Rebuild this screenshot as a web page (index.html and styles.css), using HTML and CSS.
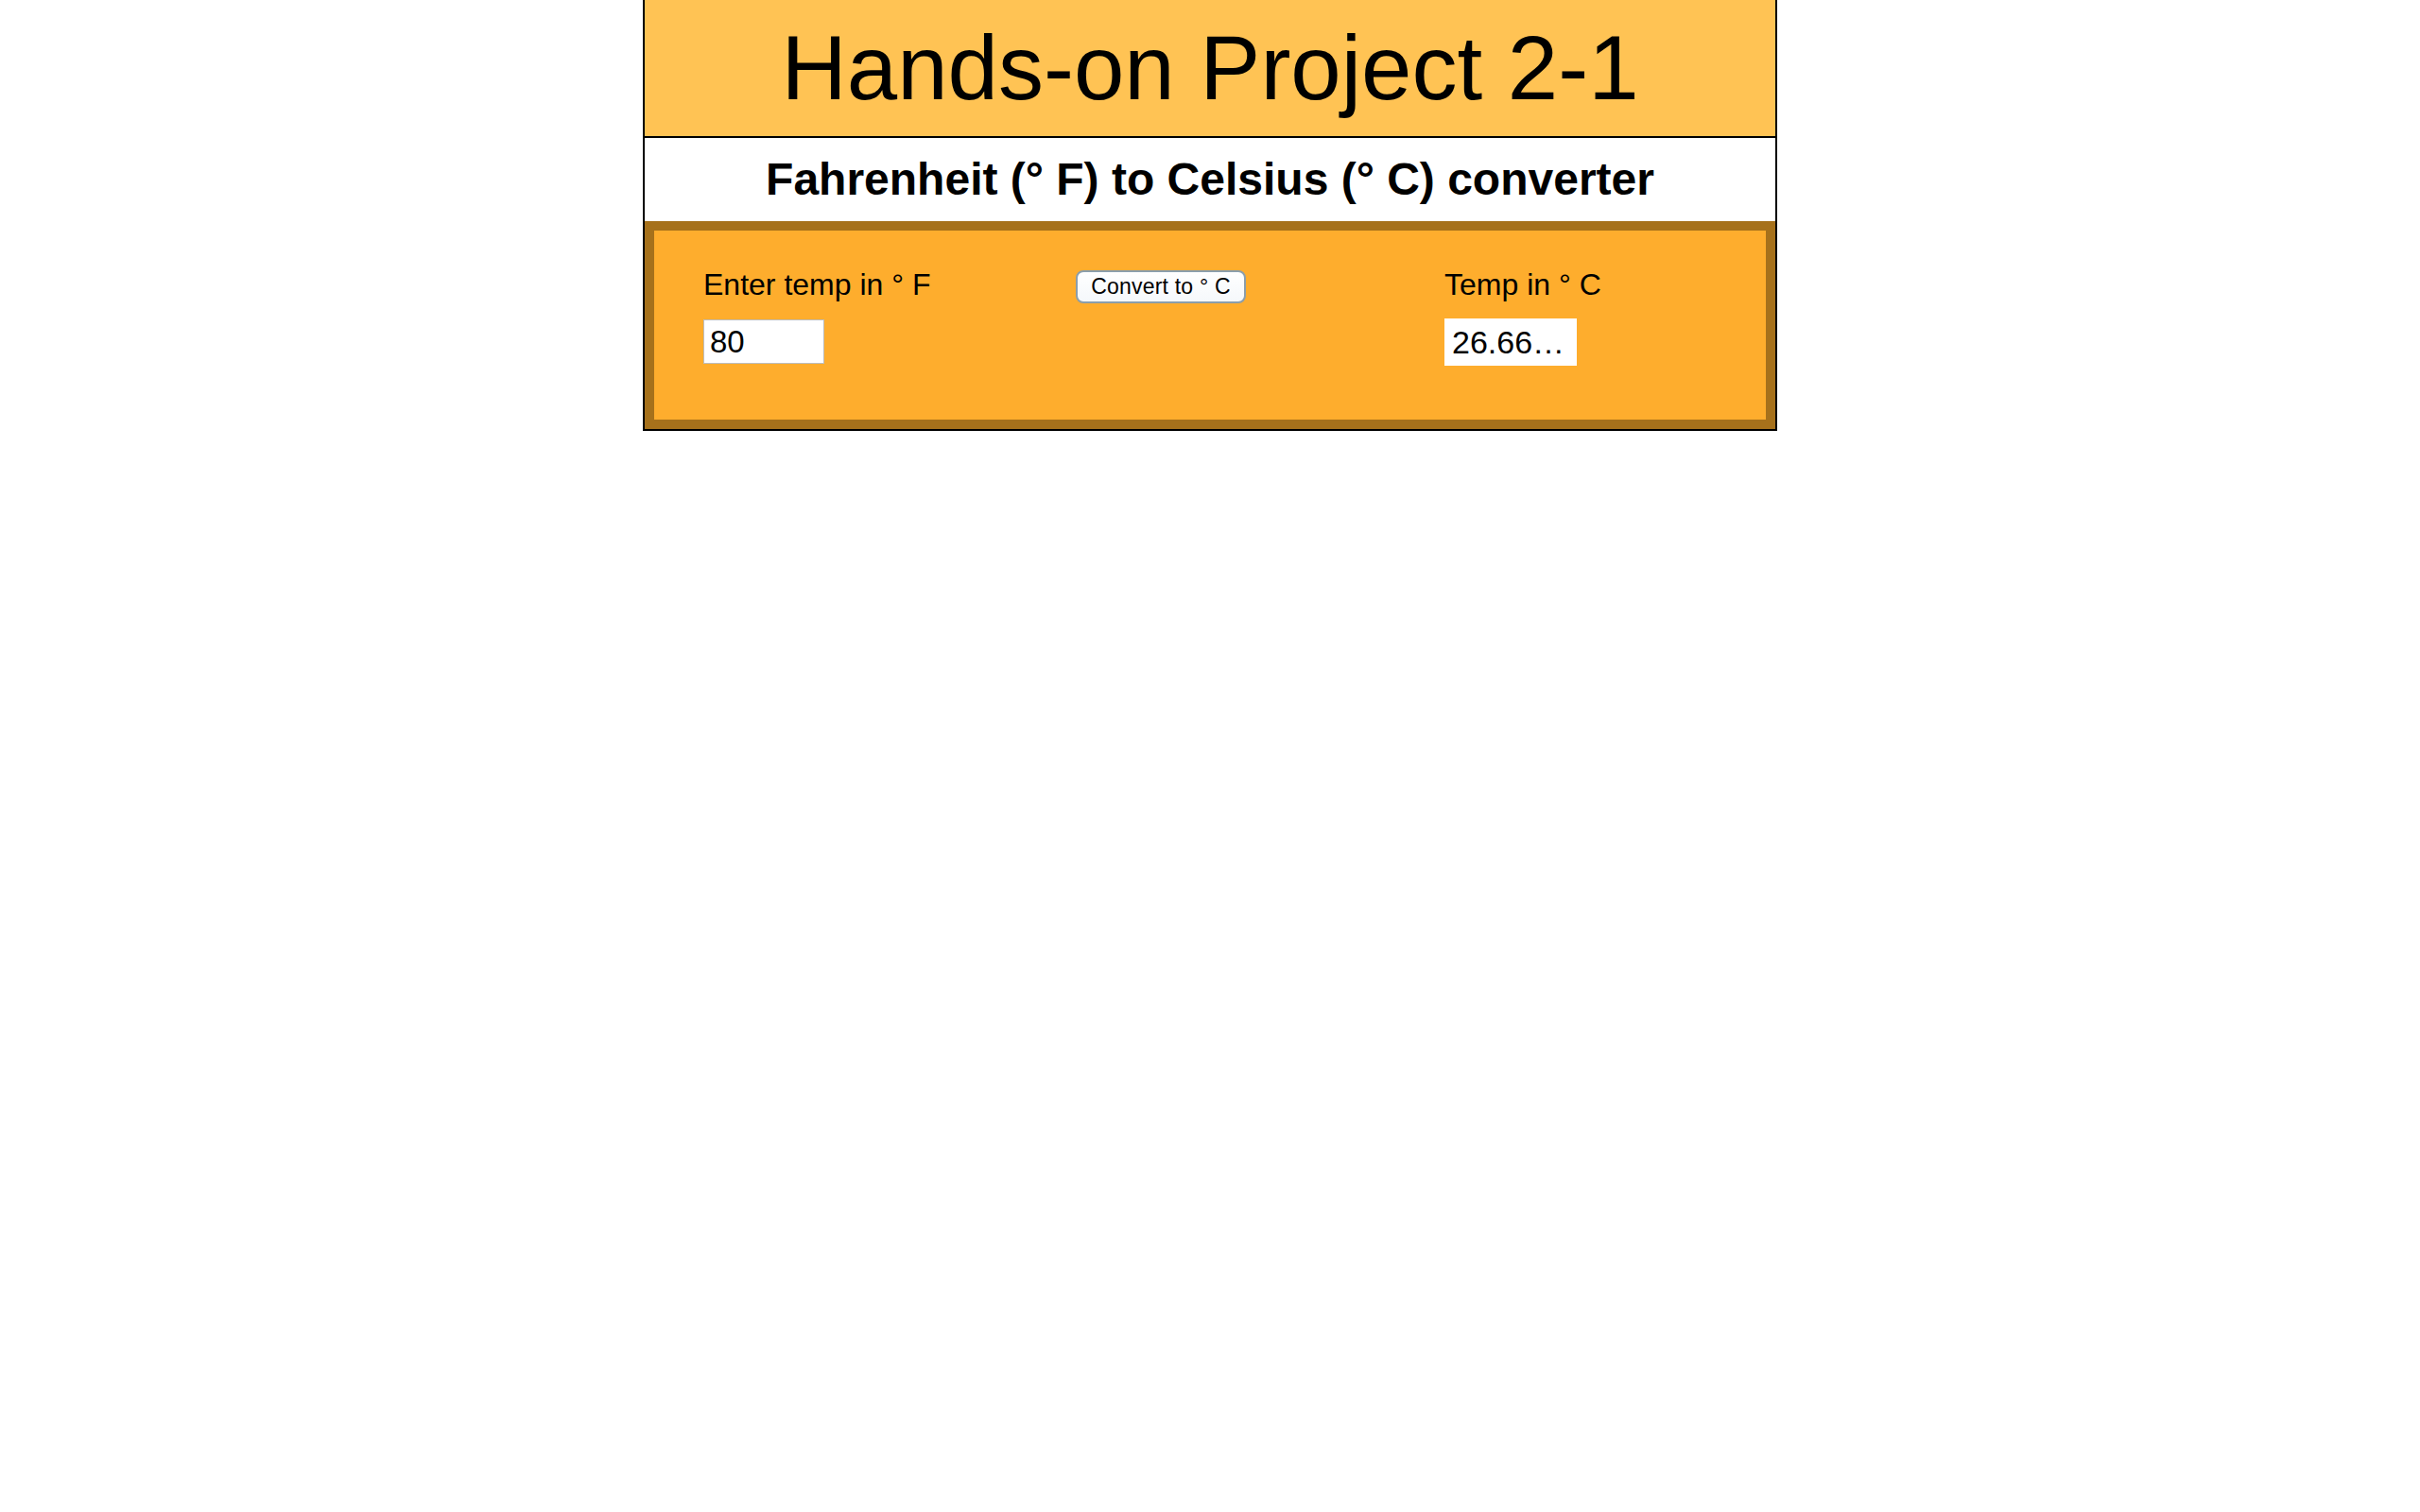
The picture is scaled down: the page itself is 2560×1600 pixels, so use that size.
FILE: index.html
```html
<!DOCTYPE html>
<html lang="en">
<head>
<meta charset="utf-8">
<title>Hands-on Project 2-1</title>
<link rel="stylesheet" href="styles.css">
</head>
<body>
<div class="page">
  <header class="banner">
    <h1>Hands-on Project 2-1</h1>
  </header>
  <div class="subtitle">
    <h2>Fahrenheit (° F) to Celsius (° C) converter</h2>
  </div>
  <div class="converter">
    <div class="col">
      <label class="field-label" for="fTemp">Enter temp in ° F</label>
      <input class="temp-input" id="fTemp" type="text" value="80">
    </div>
    <div class="col col-button">
      <button class="convert-btn" type="button">Convert to ° C</button>
    </div>
    <div class="col">
      <div class="field-label out-label">Temp in ° C</div>
      <div class="result">26.66…</div>
    </div>
  </div>
</div>
</body>
</html>
```

FILE: styles.css
```css
html, body {
  margin: 0;
  padding: 0;
  background: #ffffff;
}

body {
  font-family: "Liberation Sans", Arial, sans-serif;
  color: #000000;
}

.page {
  box-sizing: border-box;
  width: 1200px;
  margin: 0 auto;
  border-left: 2px solid #000000;
  border-right: 2px solid #000000;
  border-bottom: 2px solid #000000;
}

.banner {
  background: #ffc354;
  border-bottom: 2px solid #000000;
  padding: 17px 0 17px;
  height: 110px;
}

.banner h1 {
  margin: 0;
  font-size: 96px;
  font-weight: normal;
  line-height: 110px;
  text-align: center;
}

.subtitle {
  background: #ffffff;
  padding: 16px 0 17px;
  height: 55px;
}

.subtitle h2 {
  margin: 0;
  font-size: 48px;
  font-weight: bold;
  line-height: 55px;
  text-align: center;
}

.converter {
  background: #fead2d;
  border: 10px solid #a6711b;
  height: 200px;
  box-sizing: content-box;
  padding: 0 0 0 52px;
  display: grid;
  grid-template-columns: 394px 390px 1fr;
  align-items: start;
}

.col {
  padding-top: 39px;
  display: flex;
  flex-direction: column;
  align-items: flex-start;
}

.field-label {
  display: block;
  font-size: 32px;
  line-height: 37px;
  margin-bottom: 18px;
}

.out-label {
  margin-bottom: 17px;
}

.temp-input {
  box-sizing: border-box;
  width: 128px;
  height: 47px;
  margin: 0;
  border: 1px solid #bdbdbd;
  padding: 0 0 0 6px;
  background: #ffffff;
  font-family: "Liberation Sans", Arial, sans-serif;
  font-size: 33px;
  color: #000000;
  outline: none;
}

.col-button {
  padding-top: 42px;
}

.convert-btn {
  box-sizing: border-box;
  width: 180px;
  height: 35px;
  margin: 0;
  padding: 0;
  border: 2px solid #8b9eab;
  border-radius: 8px;
  background: linear-gradient(#ffffff, #f5f8fb);
  font-family: "Liberation Sans", Arial, sans-serif;
  font-size: 23px;
  letter-spacing: 0.2px;
  color: #000000;
  line-height: 31px;
}

.result {
  box-sizing: border-box;
  width: 140px;
  height: 50px;
  background: #ffffff;
  padding-left: 8px;
  font-size: 34px;
  line-height: 50px;
  white-space: nowrap;
  overflow: hidden;
}
```
